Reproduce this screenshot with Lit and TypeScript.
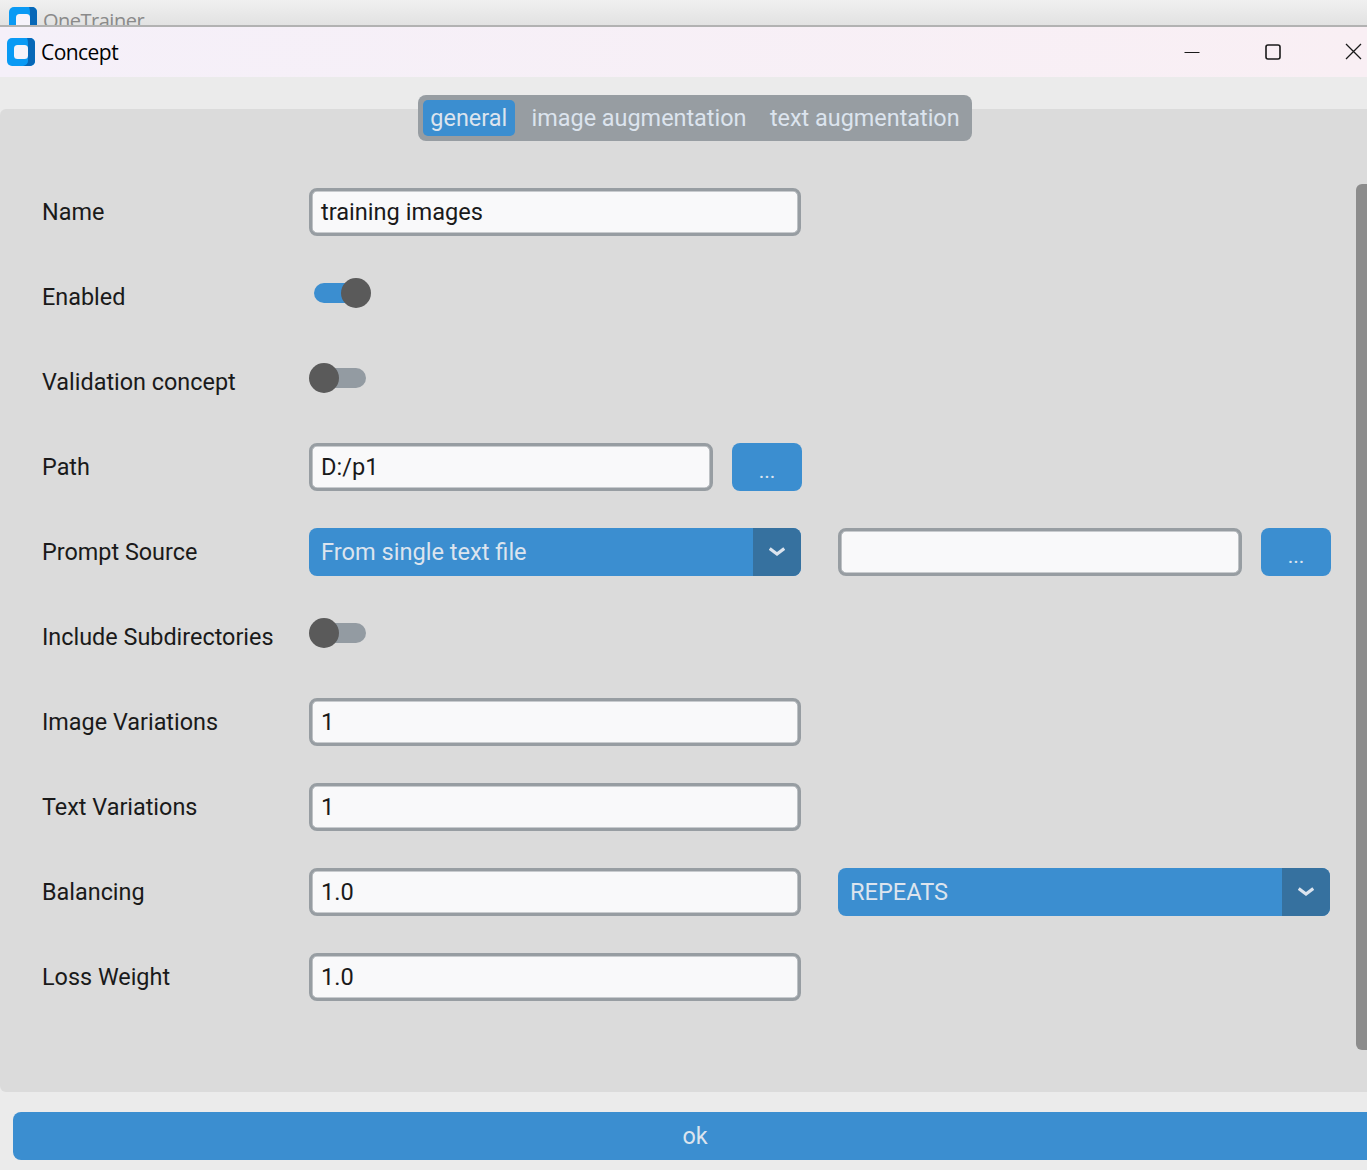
import { LitElement, html, css, svg } from "lit";
import { customElement } from "lit/decorators.js";

const appIcon = (size: number) => html`<svg class="appicon" width=${size} height=${size} viewBox="0 0 28 28">
  <rect width="28" height="28" rx="5" fill="#0a9af4"/>
  <path d="M20 0h3a5 5 0 0 1 5 5v18a5 5 0 0 1-5 5h-7c3-.6 5-2.5 5-5V6c0-2.500-.4-4.800-1-6z" fill="#0767b7"/>
  <rect x="7" y="7" width="14" height="14" rx="3.500" fill="#f6f3fa"/>
</svg>`;

const chevron = svg`<path d="M2 2.500 8 7 14 2.500" fill="none" stroke="#dce4ee" stroke-width="3.200" stroke-linecap="square"/>`;

@customElement("app-root")
export class AppRoot extends LitElement {
  static styles = css`
    :host { display: block; width: 1367px; height: 1170px; overflow: hidden; background: #ebebeb;
      font-family: Roboto, sans-serif; color: #1a1a1a; position: relative; }
    .behind { height: 25px; overflow: hidden; display: flex; gap: 6px; padding: 7px 0 0 9px; box-sizing: border-box;
      background: linear-gradient(#f0f0f0, #e2e2e2); }
    .behind span { font: 20px/32px "Open Sans", sans-serif; color: #8a8a8a; letter-spacing: -0.5px; margin-top: -2px; }
    .line { height: 2px; background: #b2b2b2; }
    .titlebar { height: 50px; display: flex; align-items: center; padding-left: 7px;
      background: linear-gradient(90deg, #f5f0f9, #f9eff4); }
    .titlebar .name { font: 21px "Open Sans", sans-serif; color: #000; margin-left: 6px; letter-spacing: -0.55px; }
    .winbtns { margin-left: auto; margin-right: -27px; display: flex; align-items: center; margin-top: -1px; }
    .winbtn { width: 81px; display: flex; justify-content: center; }
    .strip { height: 32px; display: flex; justify-content: center; }
    .tabs { height: 46px; box-sizing: border-box; margin-top: 18px; margin-left: 23px; background: #979da2; border-radius: 8px; padding: 5px;
      display: flex; position: relative; z-index: 1; }
    .tab { font-size: 23.4px; line-height: 36px; color: #dce4ee; padding: 0 7.5px; border-radius: 5px; }
    .tab:nth-child(1) { margin-right: 9.5px; }
    .tab:nth-child(2) { margin-right: 8.5px; }
    .tab.on { background: #3b8ed0; }
    .panel { width: 1380px; height: 983px; box-sizing: border-box; background: #dbdbdb; border-radius: 6px; padding: 79px 0 0 42px; position: relative; }
    .rows { display: flex; flex-direction: column; gap: 37px; }
    .row { height: 48px; display: grid; grid-template-columns: 267px 492px 37px 492px; align-items: center; }
    .label { font-size: 23.4px; line-height: 48px; white-space: nowrap; }
    .input { height: 48px; box-sizing: border-box; border: 3px solid #979da2; box-shadow: inset 0 0 0 0.6px #979da2; border-radius: 8px; background: #f9f9fa;
      padding-left: 9px; font-size: 23.6px; line-height: 42px; white-space: nowrap; }
    .btn { width: 70px; height: 48px; background: #3b8ed0; border-radius: 8px; color: #dce4ee; font-size: 21px;
      line-height: 56px; text-align: center; flex: none; }
    .pair { display: flex; gap: 19px; }
    .pair .input { flex: 0 0 404px; }
    .select { height: 48px; background: #3b8ed0; border-radius: 8px; display: flex; overflow: hidden; color: #dce4ee; font-size: 23.6px; line-height: 48px; }
    .select .val { flex: 1; padding-left: 12px; }
    .select .arrow { width: 48px; background: #36719f; display: flex; align-items: center; justify-content: center; }
    .switch { width: 63px; height: 30px; position: relative; transform: translateY(-4px); }
    .switch .track { position: absolute; left: 5px; top: 5px; width: 52px; height: 20px; border-radius: 10px; background: #939ba2; }
    .switch.on .track { background: #3b8ed0; }
    .switch .knob { position: absolute; left: 0; top: 0; width: 30px; height: 30px; border-radius: 50%; background: #5a5a5a; }
    .switch.on .knob { left: 32px; }
    .scroll { position: absolute; right: 13px; top: 75px; width: 11px; height: 866px; background: #8c8c8c; border-radius: 6px 0 0 6px; }
    .footer { padding: 20px 0 0 13px; }
    .ok { width: 1364px; height: 48px; background: #3b8ed0; border-radius: 8px 0 0 8px; color: #dce4ee; font-size: 23.4px; line-height: 48px;
      text-align: center; }
  `;

  private input(v: string) { return html`<div class="input">${v}</div>`; }
  private sw(on: boolean) { return html`<div class="switch ${on ? "on" : ""}"><div class="track"></div><div class="knob"></div></div>`; }
  private select(v: string) {
    return html`<div class="select"><div class="val">${v}</div><div class="arrow"><svg width="16" height="10" viewBox="0 0 16 10">${chevron}</svg></div></div>`;
  }

  render() {
    return html`
      <div class="behind">${appIcon(28)}<span>OneTrainer</span></div>
      <div class="line"></div>
      <div class="titlebar">
        ${appIcon(28)}<span class="name">Concept</span>
        <div class="winbtns">
          <div class="winbtn"><svg width="16" height="16" viewBox="0 0 16 16"><path d="M0.5 8.500h15" stroke="#1a1a1a" stroke-width="1"/></svg></div>
          <div class="winbtn"><svg width="16" height="16" viewBox="0 0 16 16"><rect x="1" y="1" width="14" height="14" rx="2" fill="none" stroke="#1a1a1a" stroke-width="1.600"/></svg></div>
          <div class="winbtn"><svg width="17" height="17" viewBox="0 0 17 17"><path d="M1 1l15 15M16 1L1 16" stroke="#1a1a1a" stroke-width="1.300" fill="none"/></svg></div>
        </div>
      </div>
      <div class="strip">
        <div class="tabs">
          <div class="tab on">general</div>
          <div class="tab">image augmentation</div>
          <div class="tab">text augmentation</div>
        </div>
      </div>
      <div class="panel">
        <div class="rows">
          <div class="row"><div class="label">Name</div>${this.input("training images")}</div>
          <div class="row"><div class="label">Enabled</div>${this.sw(true)}</div>
          <div class="row"><div class="label">Validation concept</div>${this.sw(false)}</div>
          <div class="row"><div class="label">Path</div><div class="pair">${this.input("D:/p1")}<div class="btn">...</div></div></div>
          <div class="row"><div class="label">Prompt Source</div>${this.select("From single text file")}<div></div><div class="pair">${this.input("")}<div class="btn">...</div></div></div>
          <div class="row"><div class="label">Include Subdirectories</div>${this.sw(false)}</div>
          <div class="row"><div class="label">Image Variations</div>${this.input("1")}</div>
          <div class="row"><div class="label">Text Variations</div>${this.input("1")}</div>
          <div class="row"><div class="label">Balancing</div>${this.input("1.0")}<div></div>${this.select("REPEATS")}</div>
          <div class="row"><div class="label">Loss Weight</div>${this.input("1.0")}</div>
        </div>
        <div class="scroll"></div>
      </div>
      <div class="footer"><div class="ok">ok</div></div>
    `;
  }
}
